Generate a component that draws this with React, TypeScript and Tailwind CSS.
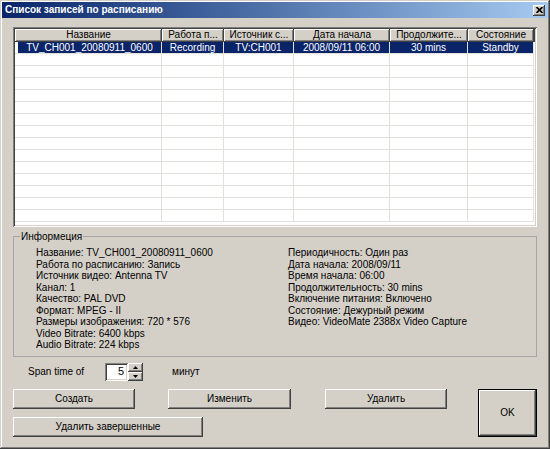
import React from 'react';

const columns = [
  { title: 'Название', width: 'w-[147px]', value: 'TV_CH001_20080911_0600' },
  { title: 'Работа п...', width: 'w-[62px]', value: 'Recording' },
  { title: 'Источник с...', width: 'w-[70px]', value: 'TV:CH001' },
  { title: 'Дата начала', width: 'w-[96px]', value: '2008/09/11 06:00' },
  { title: 'Продолжите...', width: 'w-[78px]', value: '30 mins' },
  { title: 'Состояние', width: 'w-[66px]', value: 'Standby' },
];

const leftInfo = [
  'Название: TV_CH001_20080911_0600',
  'Работа по расписанию: Запись',
  'Источник видео: Antenna TV',
  'Канал: 1',
  'Качество: PAL DVD',
  'Формат: MPEG - II',
  'Размеры изображения: 720 * 576',
  'Video Bitrate: 6400 kbps',
  'Audio Bitrate: 224 kbps',
];

const rightInfo = [
  'Периодичность: Один раз',
  'Дата начала: 2008/09/11',
  'Время начала: 06:00',
  'Продолжительность: 30 mins',
  'Включение питания: Включено',
  'Состояние: Дежурный режим',
  'Видео: VideoMate 2388x Video Capture',
];

const raised =
  'bg-[#d4d0c8] shadow-[inset_-1px_-1px_#404040,inset_1px_1px_#ffffff,inset_-2px_-2px_#808080]';

const Button = ({ label, className }: { label: string; className: string }) => (
  <button className={`${raised} ${className} flex items-center justify-center text-black`}>
    {label}
  </button>
);

const Arrow = ({ up }: { up?: boolean }) => (
  <svg width="5" height="3" viewBox="0 0 5 3">
    <path d={up ? 'M2.5 0 L5 3 L0 3 Z' : 'M0 0 L5 0 L2.5 3 Z'} fill="#000" />
  </svg>
);

const App = () => {
  const rows = Array.from({ length: 15 }, (_, i) => i);

  return (
    <div className="w-[550px] h-[449px] bg-[#d4d0c8] flex flex-col overflow-hidden font-['Liberation_Sans',Arial,sans-serif] text-[10px] text-black shadow-[inset_-1px_-1px_#404040,inset_1px_1px_#d4d0c8,inset_-2px_-2px_#808080,inset_2px_2px_#ffffff]">
      {/* title bar */}
      <div className="mx-[2px] mt-[2px] h-[16px] flex items-center bg-linear-to-r from-[#0a246a] to-[#a6caf0] pl-[3px] pr-[3px]">
        <span className="font-bold text-white text-[10px] leading-none">Список записей по расписанию</span>
        <button className={`${raised} ml-auto w-[12px] h-[11px] flex items-center justify-center`}>
          <svg width="7" height="6" viewBox="0 0 7 6">
            <path d="M0.5 0 L6.5 6 M6.5 0 L0.5 6" stroke="#000" strokeWidth="1.6" />
          </svg>
        </button>
      </div>

      <div className="flex flex-col px-[13px] pt-[9px]">
        {/* schedule list */}
        <div className="h-[200px] bg-white p-[2px] overflow-hidden shadow-[inset_1px_1px_#808080,inset_-1px_-1px_#ffffff,inset_2px_2px_#404040,inset_-2px_-2px_#d4d0c8]">
          <div className="flex h-[13px]">
            {columns.map((c) => (
              <div
                key={c.title}
                className={`${c.width} ${raised} shrink-0 text-center leading-[12px] whitespace-nowrap overflow-hidden`}
              >
                {c.title}
              </div>
            ))}
            <div className={`${raised} flex-1`} />
          </div>
          {rows.map((r) => (
            <div key={r} className="flex h-[12px]">
              {columns.map((c, i) => (
                <div
                  key={c.title}
                  className={`${c.width} shrink-0 flex border-b border-r border-[#e2e1de]`}
                >
                  <div
                    className={`flex-1 text-center leading-[11px] whitespace-nowrap ${i === 0 ? 'ml-[3px]' : ''} ${
                      r === 0 ? 'bg-[#0a246a] text-white' : ''
                    }`}
                  >
                    {r === 0 ? c.value : ''}
                  </div>
                </div>
              ))}
            </div>
          ))}
        </div>

        {/* info group */}
        <fieldset className="mt-[3px] border border-[#a5a4a8] pt-[4px] pb-[5px]">
          <legend className="ml-[6px] px-[1px] leading-[13px]">Информеция</legend>
          <div className="grid grid-cols-[252px_1fr] pl-[22px] leading-[11.5px]">
            <div className="flex flex-col">
              {leftInfo.map((t) => (
                <span key={t}>{t}</span>
              ))}
            </div>
            <div className="flex flex-col">
              {rightInfo.map((t) => (
                <span key={t}>{t}</span>
              ))}
            </div>
          </div>
        </fieldset>

        {/* span time */}
        <div className="mt-[6px] flex items-center h-[18px]">
          <span className="ml-[15px] w-[77px]">Span time of</span>
          <div className="flex h-[18px]">
            <div className="w-[23px] bg-white flex items-center justify-end pr-[4px] text-[11px] shadow-[inset_1px_1px_#808080,inset_-1px_-1px_#ffffff,inset_2px_2px_#404040,inset_-2px_-2px_#d4d0c8]">
              5
            </div>
            <div className="w-[15px] flex flex-col">
              <div className={`${raised} h-[9px] flex items-center justify-center`}>
                <Arrow up />
              </div>
              <div className={`${raised} h-[9px] flex items-center justify-center`}>
                <Arrow />
              </div>
            </div>
          </div>
          <span className="ml-[29px]">минут</span>
        </div>

        {/* buttons */}
        <div className="mt-[8px] flex">
          <div className="flex flex-col gap-[8px]">
            <div className="flex">
              <Button label="Создать" className="w-[122px] h-[20px]" />
              <Button label="Изменить" className="ml-[33px] w-[123px] h-[20px]" />
              <Button label="Удалить" className="ml-[34px] w-[122px] h-[20px]" />
            </div>
            <Button label="Удалить завершенные" className="w-[190px] h-[20px]" />
          </div>
          <button className="ml-auto w-[59px] h-[48px] bg-[#d4d0c8] flex items-center justify-center shadow-[inset_0_0_0_1px_#000000,inset_-2px_-2px_#404040,inset_2px_2px_#ffffff,inset_-3px_-3px_#808080]">
            OK
          </button>
        </div>
      </div>
    </div>
  );
};

export default App;
